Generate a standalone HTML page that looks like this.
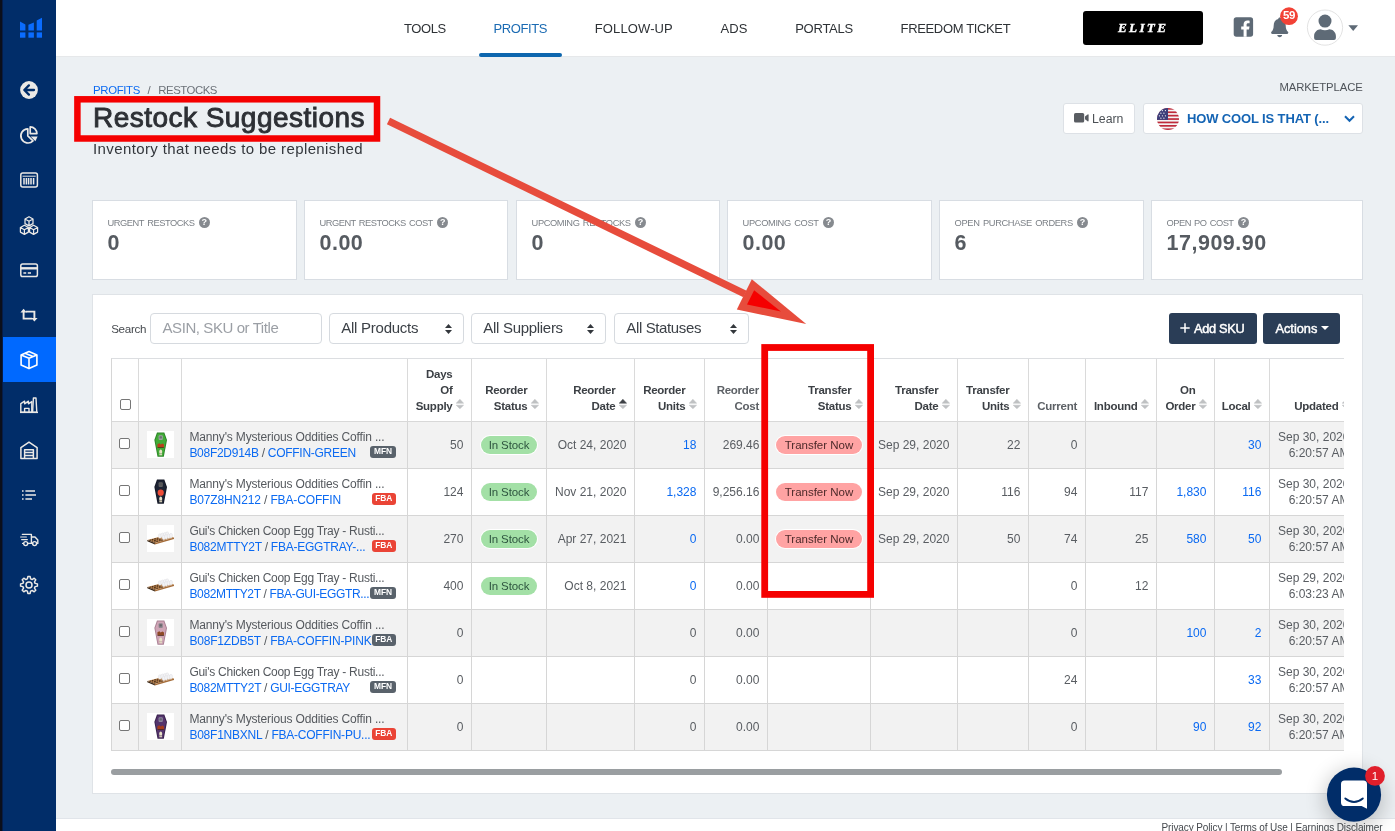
<!DOCTYPE html>
<html lang="en">
<head>
<meta charset="utf-8">
<title>Restock Suggestions</title>
<style>
*{box-sizing:border-box;margin:0;padding:0}
html,body{width:1395px;height:831px;overflow:hidden;background:#ecf0f3;font-family:"Liberation Sans",sans-serif;color:#555}
#app{position:relative;width:1395px;height:831px;overflow:hidden;background:#ecf0f3;will-change:transform}
a{color:#0b6af2;text-decoration:none}
.t{position:absolute;white-space:nowrap}
/* sidebar */
#side{position:absolute;left:0;top:0;width:56px;height:831px;background:#012d69}
#side .edge{position:absolute;left:0;top:0;width:3px;height:831px;background:linear-gradient(90deg,#0b0f1a 0,#0b0f1a 2px,#061c48 2px,#061c48 3px)}
#side .active{position:absolute;left:3px;top:337px;width:53px;height:45px;background:#0069ff}
#side svg{position:absolute;overflow:visible}
/* top */
#top{position:absolute;left:56px;top:0;width:1339px;height:57px;background:#fff;border-bottom:1px solid #e6e8ea}
.nav{font-size:13px;color:#2e3236;line-height:16px;top:21px}
.nav.on{color:#1b6bb3}
#navbar{position:absolute;left:479px;top:52.8px;width:83px;height:4.3px;background:#0d66ae;border-radius:2.2px}
#elite{position:absolute;left:1083px;top:11px;width:120px;height:34px;background:#000;border-radius:3px}
#elite .t{color:#fff;font-family:"Liberation Serif",serif;font-style:italic;font-weight:bold;font-size:13.2px;line-height:16px;top:8.7px;-webkit-text-stroke:.35px #fff}
/* heading */
.crumb{font-size:11.4px;line-height:14px;color:#6b7178;top:83px}
.ttl{font-size:28px;line-height:34px;font-weight:normal;-webkit-text-stroke:.9px #2d3035;color:#2d3035;top:101px}
.subt{font-size:15px;line-height:20px;color:#33373c;top:139px}
.mk{font-size:11.3px;line-height:14px;color:#4f545a;top:80px}
.btnw{position:absolute;background:#fff;border:1px solid #dde1e6;border-radius:3px}
/* cards */
.card{position:absolute;top:200px;height:80px;background:#fff;border:1px solid #d8dde3}
.card .l{font-size:9.3px;line-height:12px;color:#7a7f85;top:16.4px;word-spacing:1.2px}
.card .v{font-size:21.5px;line-height:26px;font-weight:bold;color:#565b61;top:29.2px}
.q{position:absolute;width:11px;height:11px;border-radius:50%;background:#868a8f;color:#fff;font-size:9px;font-weight:bold;line-height:11px;text-align:center;top:16.4px}
/* panel */
#panel{position:absolute;left:92px;top:294px;width:1271px;height:500px;background:#fff;border:1px solid #dfe3e7}
.inp{position:absolute;top:313px;height:31px;background:#fff;border:1px solid #d6dadf;border-radius:4px}
.inp .t{font-size:15px;line-height:18px;top:5.1px;color:#3c4147}
.btnd{position:absolute;top:313px;height:31px;background:#2a3d56;border-radius:3px}
.btnd .t{color:#fff;font-size:12.8px;line-height:16px;top:8.1px;font-weight:normal;-webkit-text-stroke:.45px #fff}
/* table */
#tw{position:absolute;left:111px;top:358px;width:1233px;height:395px;overflow:hidden}
table{border-collapse:separate;border-spacing:0;table-layout:fixed;width:1246px;border-top:1px solid #dcdee1;border-left:1px solid #d6d6d6}
th,td{border-right:1px solid #d6d6d6;border-bottom:1px solid #d6d6d6;overflow:hidden;white-space:nowrap;padding:0 7.6px 0 0;text-align:right;vertical-align:middle}
th{height:63px;font-size:11.5px;letter-spacing:-.25px;line-height:16px;font-weight:bold;color:#3c4045;vertical-align:bottom;padding:0 18.5px 7px 0;position:relative;background:#fff;border-right-color:#dadada;border-bottom-color:#d8d8d8}
th.ns{padding-right:8px;color:#5d6166}
th .s{position:absolute;right:7.1px;bottom:12px;width:7.8px;height:10px}
td{height:47px;font-size:12px;line-height:16px;color:#595d62}
tr.o td{background:#f2f2f2}
td.c{text-align:center;padding:0}
td.p{text-align:left;padding:0 0 0 7.4px;font-size:12px;position:relative;color:#55595e}
td.p div{overflow:hidden;width:200px;white-space:nowrap}
td.b{color:#0b6af2}
.cb{display:inline-block;width:11px;height:11px;border:1px solid #767676;border-radius:2px;background:#fff;vertical-align:middle;margin-top:-4.4px;margin-left:-1px}
.pill{display:inline-block;height:18.4px;line-height:18.6px;font-size:11.5px;border-radius:9.2px;padding:0 7.7px;color:#2f5640;box-shadow:0 0 0 1px rgba(255,255,255,.95);letter-spacing:-.1px;position:relative;top:0}
.pill.g{background:#a3e0a6}
.pill.r{background:#ffa3a3;color:#4d2a2a;padding:0 8.9px;letter-spacing:0}
.bd{position:absolute;right:11px;top:24.1px;height:11.8px;line-height:11.8px;font-size:8.4px;font-weight:bold;color:#fff;border-radius:3px;padding:0 3.6px;letter-spacing:0}
.bd.m{background:#59626b;padding:0 3.95px}.bd.m.n{padding:0 3.6px}
.bd.f{background:#ea4436}
.th{display:inline-block;width:27px;height:27px;background:#fff;vertical-align:middle;position:relative;left:.5px;top:-.6px}
tr.o .th.tr,.th.tr{background:transparent}
#sb{position:absolute;left:111px;top:769px;width:1171px;height:6px;border-radius:3px;background:#9a9ea1}
#foot{position:absolute;left:56px;top:818px;width:1339px;height:13px;background:#fff;border-top:1px solid #e1e5ea}
#foot .t{font-size:10px;line-height:13px;color:#44484d;top:2px}
#ann{position:absolute;left:0;top:0;width:1395px;height:831px;pointer-events:none}
</style>
</head>
<body>
<div id="app"><div id="top"></div><span class="t nav " style="left:404px;letter-spacing:-0.411px;">TOOLS</span><span class="t nav on" style="left:493.6px;letter-spacing:-0.424px;">PROFITS</span><span class="t nav " style="left:594.8px;letter-spacing:0.117px;">FOLLOW-UP</span><span class="t nav " style="left:720.6px;letter-spacing:0.033px;">ADS</span><span class="t nav " style="left:795.2px;letter-spacing:-0.247px;">PORTALS</span><span class="t nav " style="left:900.6px;letter-spacing:-0.355px;">FREEDOM TICKET</span><div id="navbar"></div><div id="elite"><span class="t " style="left:35px;letter-spacing:2.289px;">ELITE</span></div><svg style="position:absolute;left:1220px;top:0" width="175" height="56" viewBox="1220 0 175 56"><rect x="1233.7" y="17.3" width="19.4" height="19.4" rx="2.6" fill="#5e6a76"/><path d="M1246.6 36.7 V29.4 H1249 L1249.5 26.5 H1246.6 V24.7 C1246.6 23.7 1247 23.2 1248.2 23.2 H1249.6 V20.7 C1249.2 20.6 1248.3 20.5 1247.4 20.5 C1245.1 20.5 1243.6 21.9 1243.6 24.4 V26.5 H1241.2 V29.4 H1243.6 V36.7Z" fill="#fff"/><path d="M1279.7 17.6 C1280.6 17.6 1281.1 18.2 1281.1 19 C1284.2 19.7 1285.7 22.2 1285.7 25.4 C1285.7 29 1286.8 30.6 1288 31.8 C1288.7 32.6 1288.2 33.9 1287.1 33.9 H1272.3 C1271.2 33.9 1270.7 32.6 1271.4 31.8 C1272.6 30.6 1273.7 29 1273.7 25.4 C1273.7 22.2 1275.2 19.7 1278.3 19 C1278.3 18.2 1278.8 17.6 1279.7 17.6Z M1277.3 35 H1282.1 C1282.1 36.3 1281 37.2 1279.7 37.2 C1278.4 37.2 1277.3 36.3 1277.3 35Z" fill="#5e6a76"/><circle cx="1289" cy="16.2" r="8.9" fill="#f24236"/><circle cx="1325" cy="27.6" r="17.6" fill="#fff" stroke="#e3e3e3" stroke-width="1"/><circle cx="1325" cy="21.1" r="6.5" fill="#5e6a76"/><path d="M1314.1 38 V36 C1314.1 32 1317.4 29.2 1320.6 29.2 C1322 29.9 1323.4 30.3 1325 30.3 C1326.6 30.3 1328 29.9 1329.4 29.2 C1332.6 29.2 1335.9 32 1335.9 36 V38 Q1335.9 39.9 1334 39.9 H1316 Q1314.1 39.9 1314.1 38Z" fill="#5e6a76"/><path d="M1348.4 25.2 H1358 L1353.2 31Z" fill="#5e6a76"/></svg><span class="t" style="left:1279px;top:7.6px;width:20px;text-align:center;font-size:11.5px;font-weight:bold;line-height:14px;color:#fff;letter-spacing:-.3px">59</span><div id="side"><div class="edge"></div><div class="active"></div><svg width="56" height="831" viewBox="0 0 56 831" style="left:0;top:0" fill="none" stroke="none"><g fill="#0a6cff"><path d="M20 21.6 L25.4 24.6 V30.6 H20Z"/><rect x="20" y="32.4" width="5.4" height="5.3"/><path d="M28.4 24.8 L33.9 22.4 V30.6 H28.4Z"/><rect x="28.4" y="32.4" width="5.5" height="5.3"/><path d="M36.7 20.6 L42 17.8 V30.6 H36.7Z"/><rect x="36.7" y="32.4" width="5.3" height="5.3"/></g><circle cx="29" cy="90" r="8.9" fill="#ebe9e6"/><path d="M24.6 90 H34 M28.9 85.4 L24.3 90 L28.9 94.6" stroke="#012d69" stroke-width="2.3" fill="none" stroke-linecap="round" stroke-linejoin="round"/><g stroke="#ebe9e6" stroke-width="1.7" fill="none" stroke-linejoin="round"><path d="M27.8 128.8 A7.1 7.1 0 1 0 33 140.9 L27.8 135.9 Z"/><path d="M30.2 126.9 V133.6 H36.9 A6.7 6.7 0 0 0 30.2 126.9Z"/></g><path d="M30.6 136.4 H37.6 L35.4 141.2Z" fill="#ebe9e6"/><g stroke="#ebe9e6" fill="none"><rect x="20.8" y="172.9" width="16.6" height="14.2" rx="2" stroke-width="1.5"/><path d="M22.5 176.2 H35.7" stroke-width="1"/><path d="M24 178 V184.4 M26.4 178 V184.4 M28.6 178 V184.4 M31 178 V184.4 M33.6 178 V184.4" stroke-width="1.5"/></g><g stroke="#ebe9e6" stroke-width="1.25" fill="none" stroke-linejoin="round"><path d="M29 216.70000000000002 L33.002 219.0 V223.60000000000002 L29 225.9 L24.998 223.60000000000002 V219.0Z M24.998 219.0 L29 221.3 L33.002 219.0 M29 221.3 V225.9"/><path d="M24.4 225.20000000000002 L28.401999999999997 227.5 V232.10000000000002 L24.4 234.4 L20.398 232.10000000000002 V227.5Z M20.398 227.5 L24.4 229.8 L28.401999999999997 227.5 M24.4 229.8 V234.4"/><path d="M33.6 225.20000000000002 L37.602000000000004 227.5 V232.10000000000002 L33.6 234.4 L29.598000000000003 232.10000000000002 V227.5Z M29.598000000000003 227.5 L33.6 229.8 L37.602000000000004 227.5 M33.6 229.8 V234.4"/></g><g stroke="#ebe9e6" fill="none"><rect x="20.8" y="264" width="16.6" height="12.6" rx="1.8" stroke-width="1.5"/><path d="M20.8 268.3 H37.4" stroke-width="2.4"/><path d="M23.4 273 H26.2 M27.8 273 H31" stroke-width="1.4"/></g><g stroke="#ebe9e6" stroke-width="1.9" fill="none" stroke-linejoin="miter"><path d="M23.6 311 V318.6 H32.2"/><path d="M34.4 319.4 V311.6 H26"/></g><path d="M20.4 312.4 L23.6 308.8 L26.8 312.4Z M31.2 318 L34.4 321.6 L37.6 318Z" fill="#ebe9e6"/><g stroke="#fff" stroke-width="1.6" fill="none" stroke-linejoin="round"><path d="M29 351.6 L36.9 354.9 V365 L29 368.6 L21.1 365 V354.9Z"/><path d="M21.1 354.9 L29 358.2 L36.9 354.9 M29 358.2 V368.6 M25 353.3 L33 356.6"/></g><g stroke="#ebe9e6" stroke-width="1.4" fill="none" stroke-linejoin="round"><path d="M20.8 412.2 V403.6 L24.6 401.2 V403.8 L28.4 401.2 V403.8 L31.8 401.6 V412.2Z"/><path d="M32.6 412.2 L33.4 398 H36 L36.8 412.2Z"/><path d="M20 412.4 H38" /><path d="M24.6 412 V408.4 H29 V412"/></g><g stroke="#ebe9e6" stroke-width="1.5" fill="none" stroke-linejoin="round"><path d="M20.9 458.4 V447.6 L29 442.2 L37.1 447.6 V458.4Z"/><path d="M24.6 458.4 V449.8 H33.4 V458.4 M24.6 452.6 H33.4 M24.6 455.5 H33.4"/></g><g stroke="#ebe9e6" stroke-width="1.7" fill="none"><path d="M22 491 H23.6 M25.4 491 H35 M22 495 H23.6 M25.4 495 H36 M22 499 H23.6 M25.4 499 H32"/></g><g stroke="#ebe9e6" stroke-width="1.4" fill="none" stroke-linejoin="round" stroke-linecap="round"><path d="M22.4 534.4 H31.4 V543.2 M31.4 537 H35 L37.8 540 V543.4 H36.6 M22.6 543.4 H23.4 M28 543.4 H32.6"/><circle cx="25.7" cy="543.6" r="2"/><circle cx="34.6" cy="543.6" r="2"/><path d="M20.6 537 H26.4 M21.6 539.6 H27.4" stroke-width="1.1"/></g><g stroke="#ebe9e6" stroke-width="1.5" fill="none" stroke-linejoin="round"><path d="M27.87 576.58 L30.13 576.58 L30.61 578.91 L32.16 579.55 L34.16 578.24 L35.76 579.84 L34.45 581.84 L35.09 583.39 L37.42 583.87 L37.42 586.13 L35.09 586.61 L34.45 588.16 L35.76 590.16 L34.16 591.76 L32.16 590.45 L30.61 591.09 L30.13 593.42 L27.87 593.42 L27.39 591.09 L25.84 590.45 L23.84 591.76 L22.24 590.16 L23.55 588.16 L22.91 586.61 L20.58 586.13 L20.58 583.87 L22.91 583.39 L23.55 581.84 L22.24 579.84 L23.84 578.24 L25.84 579.55 L27.39 578.91Z"/><circle cx="29" cy="585" r="3"/></g></svg></div><span class="t crumb" style="left:93px;letter-spacing:-0.346px;"><a href="#">PROFITS</a></span><span class="t crumb" style="left:147.6px;">/</span><span class="t crumb" style="left:158.3px;letter-spacing:-0.481px;">RESTOCKS</span><span class="t ttl" style="left:93px;letter-spacing:0.47px;">Restock Suggestions</span><span class="t subt" style="left:93px;letter-spacing:0.387px;">Inventory that needs to be replenished</span><span class="t mk" style="left:1279.5px;letter-spacing:-0.083px;">MARKETPLACE</span><div class="btnw" style="left:1063px;top:103px;width:72px;height:31px"><svg style="position:absolute;left:10px;top:9.4px" width="15" height="10" viewBox="0 0 15 10"><rect x="0" y="0" width="10.2" height="9.6" rx="1.6" fill="#595d62"/><path d="M11 3.4 L13.6 1.4 Q14.6 .8 14.6 2 V7.6 Q14.6 8.8 13.6 8.2 L11 6.2Z" fill="#595d62"/></svg><span class="t " style="left:28px;letter-spacing:-0.013px;top:7px;font-size:12.3px;line-height:16px;color:#4c5156">Learn</span></div><div class="btnw" style="left:1143px;top:103px;width:220px;height:31px"><svg style="position:absolute;left:13px;top:4px" width="22" height="22" viewBox="0 0 22 22"><defs><clipPath id="fc"><circle cx="11" cy="11" r="11"/></clipPath></defs><g clip-path="url(#fc)"><rect width="22" height="22" fill="#f4f4f4"/><rect x="0" y="0" width="22" height="1.7" fill="#bf2b3b"/><rect x="0" y="3.4" width="22" height="1.7" fill="#bf2b3b"/><rect x="0" y="6.8" width="22" height="1.7" fill="#bf2b3b"/><rect x="0" y="10.2" width="22" height="1.7" fill="#bf2b3b"/><rect x="0" y="13.6" width="22" height="1.7" fill="#bf2b3b"/><rect x="0" y="17" width="22" height="1.7" fill="#bf2b3b"/><rect x="0" y="20.4" width="22" height="1.7" fill="#bf2b3b"/><rect x="0" y="0" width="11" height="11.9" fill="#3d3f7a"/><g fill="#fff"><circle cx="2.4" cy="2.6" r=".6"/><circle cx="5.4" cy="2.6" r=".6"/><circle cx="8.4" cy="2.6" r=".6"/><circle cx="3.9" cy="5.2" r=".6"/><circle cx="6.9" cy="5.2" r=".6"/><circle cx="2.4" cy="7.8" r=".6"/><circle cx="5.4" cy="7.8" r=".6"/><circle cx="8.4" cy="7.8" r=".6"/><circle cx="3.9" cy="10.2" r=".6"/><circle cx="6.9" cy="10.2" r=".6"/></g></g></svg><span class="t " style="left:43px;letter-spacing:-0.134px;top:7px;font-size:13px;line-height:16px;font-weight:bold;color:#1464b4">HOW COOL IS THAT (...</span><svg style="position:absolute;left:200px;top:11px" width="11" height="8" viewBox="0 0 11 8"><path d="M1 1.2 L5.5 5.8 L10 1.2" fill="none" stroke="#1464b4" stroke-width="2"/></svg></div><div class="card" style="left:92px;width:205px"><span class="t l" style="left:14.6px;letter-spacing:-0.467px;">URGENT RESTOCKS</span><span class="q" style="left:105.8px">?</span><span class="t v" style="left:14.6px;letter-spacing:0.931px;">0</span></div><div class="card" style="left:304px;width:204px"><span class="t l" style="left:14.6px;letter-spacing:-0.513px;">URGENT RESTOCKS COST</span><span class="q" style="left:132.2px">?</span><span class="t v" style="left:14.6px;letter-spacing:0.447px;">0.00</span></div><div class="card" style="left:516px;width:204px"><span class="t l" style="left:14.6px;letter-spacing:-0.406px;">UPCOMING RESTOCKS</span><span class="q" style="left:117.9px">?</span><span class="t v" style="left:14.6px;letter-spacing:0.931px;">0</span></div><div class="card" style="left:727px;width:205px"><span class="t l" style="left:14.6px;letter-spacing:-0.362px;">UPCOMING COST</span><span class="q" style="left:94.9px">?</span><span class="t v" style="left:14.6px;letter-spacing:0.447px;">0.00</span></div><div class="card" style="left:939px;width:205px"><span class="t l" style="left:14.6px;letter-spacing:-0.356px;">OPEN PURCHASE ORDERS</span><span class="q" style="left:137.1px">?</span><span class="t v" style="left:14.6px;letter-spacing:0.931px;">6</span></div><div class="card" style="left:1151px;width:212px"><span class="t l" style="left:14.6px;letter-spacing:-0.525px;">OPEN PO COST</span><span class="q" style="left:85.9px">?</span><span class="t v" style="left:14.6px;letter-spacing:0.493px;">17,909.90</span></div><div id="panel"></div><span class="t " style="left:111.2px;letter-spacing:-0.307px;top:321.3px;font-size:11.6px;line-height:15px;color:#45494e">Search</span><div class="inp" style="left:150px;width:172px"><span class="t " style="left:11.5px;letter-spacing:-0.416px;color:#9b9fa5">ASIN, SKU or Title</span></div><div class="inp" style="left:329px;width:135px"><span class="t " style="left:11.3px;letter-spacing:-0.259px;">All Products</span><svg style="position:absolute;right:11px;top:10px" width="7" height="10" viewBox="0 0 7 10"><path d="M3.5 0 L7 4 H0Z M0 6 H7 L3.5 10Z" fill="#33373c"/></svg></div><div class="inp" style="left:471px;width:135px"><span class="t " style="left:11.3px;letter-spacing:-0.298px;">All Suppliers</span><svg style="position:absolute;right:11px;top:10px" width="7" height="10" viewBox="0 0 7 10"><path d="M3.5 0 L7 4 H0Z M0 6 H7 L3.5 10Z" fill="#33373c"/></svg></div><div class="inp" style="left:614px;width:135px"><span class="t " style="left:11.3px;letter-spacing:-0.374px;">All Statuses</span><svg style="position:absolute;right:11px;top:10px" width="7" height="10" viewBox="0 0 7 10"><path d="M3.5 0 L7 4 H0Z M0 6 H7 L3.5 10Z" fill="#33373c"/></svg></div><div class="btnd" style="left:1169px;width:88px"><svg style="position:absolute;left:11px;top:9.8px" width="10" height="10" viewBox="0 0 10 10"><path d="M5 .3 V9.7 M.3 5 H9.7" stroke="#fff" stroke-width="1.5"/></svg><span class="t " style="left:24.9px;letter-spacing:-0.29px;">Add SKU</span></div><div class="btnd" style="left:1263px;width:77px"><span class="t " style="left:12.4px;letter-spacing:0.005px;">Actions</span><svg style="position:absolute;left:58px;top:13.2px" width="8" height="4" viewBox="0 0 8 4"><path d="M0 0 H8 L4 4Z" fill="#fff"/></svg></div><div id="tw"><table><colgroup><col style="width:27px"><col style="width:43px"><col style="width:226px"><col style="width:64px"><col style="width:75px"><col style="width:88px"><col style="width:70px"><col style="width:63px"><col style="width:103px"><col style="width:87px"><col style="width:71px"><col style="width:57px"><col style="width:71px"><col style="width:58px"><col style="width:55px"><col style="width:88px"></colgroup><thead><tr><th class="ns" style="text-align:center;padding:0 0 10px 0"><span class="cb" style="margin:0 0 -1px 0"></span></th><th class="ns"></th><th class="ns"></th><th class="">Days<br>Of<br>Supply<svg class="s" viewBox="0 0 7.8 10" preserveAspectRatio="none"><path d="M3.9 .2 L7.6 4.3 H.2Z" fill="#bfc1c3" stroke="#bfc1c3" stroke-width=".5" stroke-linejoin="round"/><path d="M.2 6.2 H7.6 L3.9 9.8Z" fill="#bfc1c3" stroke="#bfc1c3" stroke-width=".5" stroke-linejoin="round"/></svg></th><th class="">Reorder<br>Status<svg class="s" viewBox="0 0 7.8 10" preserveAspectRatio="none"><path d="M3.9 .2 L7.6 4.3 H.2Z" fill="#bfc1c3" stroke="#bfc1c3" stroke-width=".5" stroke-linejoin="round"/><path d="M.2 6.2 H7.6 L3.9 9.8Z" fill="#bfc1c3" stroke="#bfc1c3" stroke-width=".5" stroke-linejoin="round"/></svg></th><th class="">Reorder<br>Date<svg class="s" viewBox="0 0 7.8 10" preserveAspectRatio="none"><path d="M3.9 .2 L7.6 4.3 H.2Z" fill="#3c4045" stroke="#3c4045" stroke-width=".5" stroke-linejoin="round"/><path d="M.2 6.2 H7.6 L3.9 9.8Z" fill="#bfc1c3" stroke="#bfc1c3" stroke-width=".5" stroke-linejoin="round"/></svg></th><th class="">Reorder<br>Units<svg class="s" viewBox="0 0 7.8 10" preserveAspectRatio="none"><path d="M3.9 .2 L7.6 4.3 H.2Z" fill="#bfc1c3" stroke="#bfc1c3" stroke-width=".5" stroke-linejoin="round"/><path d="M.2 6.2 H7.6 L3.9 9.8Z" fill="#bfc1c3" stroke="#bfc1c3" stroke-width=".5" stroke-linejoin="round"/></svg></th><th class="ns">Reorder<br>Cost</th><th class="">Transfer<br>Status<svg class="s" viewBox="0 0 7.8 10" preserveAspectRatio="none"><path d="M3.9 .2 L7.6 4.3 H.2Z" fill="#bfc1c3" stroke="#bfc1c3" stroke-width=".5" stroke-linejoin="round"/><path d="M.2 6.2 H7.6 L3.9 9.8Z" fill="#bfc1c3" stroke="#bfc1c3" stroke-width=".5" stroke-linejoin="round"/></svg></th><th class="">Transfer<br>Date<svg class="s" viewBox="0 0 7.8 10" preserveAspectRatio="none"><path d="M3.9 .2 L7.6 4.3 H.2Z" fill="#bfc1c3" stroke="#bfc1c3" stroke-width=".5" stroke-linejoin="round"/><path d="M.2 6.2 H7.6 L3.9 9.8Z" fill="#bfc1c3" stroke="#bfc1c3" stroke-width=".5" stroke-linejoin="round"/></svg></th><th class="">Transfer<br>Units<svg class="s" viewBox="0 0 7.8 10" preserveAspectRatio="none"><path d="M3.9 .2 L7.6 4.3 H.2Z" fill="#bfc1c3" stroke="#bfc1c3" stroke-width=".5" stroke-linejoin="round"/><path d="M.2 6.2 H7.6 L3.9 9.8Z" fill="#bfc1c3" stroke="#bfc1c3" stroke-width=".5" stroke-linejoin="round"/></svg></th><th class="ns">Current</th><th class="">Inbound<svg class="s" viewBox="0 0 7.8 10" preserveAspectRatio="none"><path d="M3.9 .2 L7.6 4.3 H.2Z" fill="#bfc1c3" stroke="#bfc1c3" stroke-width=".5" stroke-linejoin="round"/><path d="M.2 6.2 H7.6 L3.9 9.8Z" fill="#bfc1c3" stroke="#bfc1c3" stroke-width=".5" stroke-linejoin="round"/></svg></th><th class="">On<br>Order<svg class="s" viewBox="0 0 7.8 10" preserveAspectRatio="none"><path d="M3.9 .2 L7.6 4.3 H.2Z" fill="#bfc1c3" stroke="#bfc1c3" stroke-width=".5" stroke-linejoin="round"/><path d="M.2 6.2 H7.6 L3.9 9.8Z" fill="#bfc1c3" stroke="#bfc1c3" stroke-width=".5" stroke-linejoin="round"/></svg></th><th class="">Local<svg class="s" viewBox="0 0 7.8 10" preserveAspectRatio="none"><path d="M3.9 .2 L7.6 4.3 H.2Z" fill="#bfc1c3" stroke="#bfc1c3" stroke-width=".5" stroke-linejoin="round"/><path d="M.2 6.2 H7.6 L3.9 9.8Z" fill="#bfc1c3" stroke="#bfc1c3" stroke-width=".5" stroke-linejoin="round"/></svg></th><th class="">Updated<svg class="s" viewBox="0 0 7.8 10" preserveAspectRatio="none"><path d="M3.9 .2 L7.6 4.3 H.2Z" fill="#bfc1c3" stroke="#bfc1c3" stroke-width=".5" stroke-linejoin="round"/><path d="M.2 6.2 H7.6 L3.9 9.8Z" fill="#bfc1c3" stroke="#bfc1c3" stroke-width=".5" stroke-linejoin="round"/></svg></th></tr></thead><tbody><tr class="o"><td class="c"><span class="cb"></span></td><td class="c"><svg class="th" viewBox="0 0 27 27"><path d="M10 1.6 H17.3 L20 8.9 L16.8 25.7 H10.5 L7.35 8.9Z" fill="#2c8428"/><path d="M10.7 2.5 H16.6 L19 9 L16.1 24.8 H11.2 L8.35 9Z" fill="#41ab37"/><rect x="11.6" y="4.3" width="4.2" height="4.7" rx=".9" fill="#9aa0a0"/><rect x="12.5" y="5.3" width="2.4" height="2.2" rx=".5" fill="#4b4f52" opacity=".6"/><path d="M10.4 13.2 L12.4 12.2 L13.6 13.4 L15.4 12.4 L17 13.4 V16.4 H10.4Z" fill="#b9401a"/><path d="M10.6 16 H16.8 V17 H10.6Z" fill="#2a1a10" opacity=".55"/><path d="M12.3 24.2 V20.2 Q12.3 18.4 13.7 18.4 Q15.1 18.4 15.1 20.2 V24.2Z" fill="#e9e2c8"/><path d="M11.8 22.4 H15.6 V23.2 H11.8Z" fill="#2c8428" opacity=".6"/></svg></td><td class="p"><div><span style="letter-spacing:-0.152px">Manny's Mysterious Oddities Coffin ...</span></div><div><span style="letter-spacing:-0.279px"><a href="#">B08F2D914B</a> / <a href="#">COFFIN-GREEN</a></span></div><span class="bd m">MFN</span></td><td>50</td><td style="text-align:center;padding:0"><span class="pill g">In Stock</span></td><td>Oct 24, 2020</td><td class="b">18</td><td>269.46</td><td style="text-align:center;padding:0"><span class="pill r">Transfer Now</span></td><td>Sep 29, 2020</td><td>22</td><td>0</td><td></td><td class="b"></td><td class="b">30</td><td>Sep 30, 2020<br>6:20:57 AM</td></tr><tr class=""><td class="c"><span class="cb"></span></td><td class="c"><svg class="th" viewBox="0 0 27 27"><path d="M10 1.6 H17.3 L20 8.9 L16.8 25.7 H10.5 L7.35 8.9Z" fill="#141826"/><path d="M10.7 2.5 H16.6 L19 9 L16.1 24.8 H11.2 L8.35 9Z" fill="#1d2333"/><rect x="11.6" y="4.3" width="4.2" height="4.7" rx=".9" fill="#5f5f60"/><rect x="12.5" y="5.3" width="2.4" height="2.2" rx=".5" fill="#4b4f52" opacity=".6"/><circle cx="13.7" cy="14.7" r="3.1" fill="#ef4d37"/><path d="M12.3 24.2 V20.2 Q12.3 18.4 13.7 18.4 Q15.1 18.4 15.1 20.2 V24.2Z" fill="#e9e2c8"/><path d="M11.8 22.4 H15.6 V23.2 H11.8Z" fill="#141826" opacity=".6"/></svg></td><td class="p"><div><span style="letter-spacing:-0.152px">Manny's Mysterious Oddities Coffin ...</span></div><div><span style="letter-spacing:-0.133px"><a href="#">B07Z8HN212</a> / <a href="#">FBA-COFFIN</a></span></div><span class="bd f">FBA</span></td><td>124</td><td style="text-align:center;padding:0"><span class="pill g">In Stock</span></td><td>Nov 21, 2020</td><td class="b">1,328</td><td>9,256.16</td><td style="text-align:center;padding:0"><span class="pill r">Transfer Now</span></td><td>Sep 29, 2020</td><td>116</td><td>94</td><td>117</td><td class="b">1,830</td><td class="b">116</td><td>Sep 30, 2020<br>6:20:57 AM</td></tr><tr class="o"><td class="c"><span class="cb"></span></td><td class="c"><svg class="th" viewBox="0 0 27 27"><path d="M.3 14.9 L19.4 10 L27 12.6 L7.9 17.9Z" fill="#c18b56"/><path d="M.3 14.9 L7.9 17.9 V19.4 L.3 16.3Z" fill="#3b2716"/><path d="M7.9 17.9 L27 12.6 V14 L7.9 19.4Z" fill="#a56d3a"/><g fill="#4a2e17"><ellipse cx="3.16" cy="15.16" rx="1.05" ry=".55" transform="rotate(-14 3.16 15.16)"/><ellipse cx="5.64" cy="14.52" rx="1.05" ry=".55" transform="rotate(-14 5.64 14.52)"/><ellipse cx="8.12" cy="13.88" rx="1.05" ry=".55" transform="rotate(-14 8.12 13.88)"/><ellipse cx="10.61" cy="13.25" rx="1.05" ry=".55" transform="rotate(-14 10.61 13.25)"/><ellipse cx="5.44" cy="16.06" rx="1.05" ry=".55" transform="rotate(-14 5.44 16.06)"/><ellipse cx="7.92" cy="15.42" rx="1.05" ry=".55" transform="rotate(-14 7.92 15.42)"/><ellipse cx="10.40" cy="14.78" rx="1.05" ry=".55" transform="rotate(-14 10.40 14.78)"/><ellipse cx="12.89" cy="14.15" rx="1.05" ry=".55" transform="rotate(-14 12.89 14.15)"/><ellipse cx="7.72" cy="16.96" rx="1.05" ry=".55" transform="rotate(-14 7.72 16.96)"/><ellipse cx="10.20" cy="16.32" rx="1.05" ry=".55" transform="rotate(-14 10.20 16.32)"/><ellipse cx="12.68" cy="15.68" rx="1.05" ry=".55" transform="rotate(-14 12.68 15.68)"/><ellipse cx="15.17" cy="15.05" rx="1.05" ry=".55" transform="rotate(-14 15.17 15.05)"/></g><g fill="#f3f3f5" stroke="#d6d6db" stroke-width=".35"><ellipse cx="12.90" cy="11.01" rx="1.55" ry="2.35"/><ellipse cx="15.38" cy="10.37" rx="1.55" ry="2.35"/><ellipse cx="17.86" cy="9.73" rx="1.55" ry="2.35"/><ellipse cx="20.15" cy="9.14" rx="1.55" ry="2.35"/><ellipse cx="16.70" cy="12.51" rx="1.55" ry="2.35"/><ellipse cx="19.18" cy="11.87" rx="1.55" ry="2.35"/><ellipse cx="21.66" cy="11.23" rx="1.55" ry="2.35"/><ellipse cx="23.95" cy="10.64" rx="1.55" ry="2.35"/></g></svg></td><td class="p"><div><span style="letter-spacing:-0.266px">Gui's Chicken Coop Egg Tray - Rusti...</span></div><div><span style="letter-spacing:-0.234px"><a href="#">B082MTTY2T</a> / <a href="#">FBA-EGGTRAY-...</a></span></div><span class="bd f">FBA</span></td><td>270</td><td style="text-align:center;padding:0"><span class="pill g">In Stock</span></td><td>Apr 27, 2021</td><td class="b">0</td><td>0.00</td><td style="text-align:center;padding:0"><span class="pill r">Transfer Now</span></td><td>Sep 29, 2020</td><td>50</td><td>74</td><td>25</td><td class="b">580</td><td class="b">50</td><td>Sep 30, 2020<br>6:20:57 AM</td></tr><tr class=""><td class="c"><span class="cb"></span></td><td class="c"><svg class="th tr" viewBox="0 0 27 27"><path d="M.3 14.9 L19.4 10 L27 12.6 L7.9 17.9Z" fill="#c18b56"/><path d="M.3 14.9 L7.9 17.9 V19.4 L.3 16.3Z" fill="#3b2716"/><path d="M7.9 17.9 L27 12.6 V14 L7.9 19.4Z" fill="#a56d3a"/><g fill="#4a2e17"><ellipse cx="3.16" cy="15.16" rx="1.05" ry=".55" transform="rotate(-14 3.16 15.16)"/><ellipse cx="5.64" cy="14.52" rx="1.05" ry=".55" transform="rotate(-14 5.64 14.52)"/><ellipse cx="8.12" cy="13.88" rx="1.05" ry=".55" transform="rotate(-14 8.12 13.88)"/><ellipse cx="10.61" cy="13.25" rx="1.05" ry=".55" transform="rotate(-14 10.61 13.25)"/><ellipse cx="5.44" cy="16.06" rx="1.05" ry=".55" transform="rotate(-14 5.44 16.06)"/><ellipse cx="7.92" cy="15.42" rx="1.05" ry=".55" transform="rotate(-14 7.92 15.42)"/><ellipse cx="10.40" cy="14.78" rx="1.05" ry=".55" transform="rotate(-14 10.40 14.78)"/><ellipse cx="12.89" cy="14.15" rx="1.05" ry=".55" transform="rotate(-14 12.89 14.15)"/><ellipse cx="7.72" cy="16.96" rx="1.05" ry=".55" transform="rotate(-14 7.72 16.96)"/><ellipse cx="10.20" cy="16.32" rx="1.05" ry=".55" transform="rotate(-14 10.20 16.32)"/><ellipse cx="12.68" cy="15.68" rx="1.05" ry=".55" transform="rotate(-14 12.68 15.68)"/><ellipse cx="15.17" cy="15.05" rx="1.05" ry=".55" transform="rotate(-14 15.17 15.05)"/></g><g fill="#f3f3f5" stroke="#d6d6db" stroke-width=".35"><ellipse cx="12.90" cy="11.01" rx="1.55" ry="2.35"/><ellipse cx="15.38" cy="10.37" rx="1.55" ry="2.35"/><ellipse cx="17.86" cy="9.73" rx="1.55" ry="2.35"/><ellipse cx="20.15" cy="9.14" rx="1.55" ry="2.35"/><ellipse cx="16.70" cy="12.51" rx="1.55" ry="2.35"/><ellipse cx="19.18" cy="11.87" rx="1.55" ry="2.35"/><ellipse cx="21.66" cy="11.23" rx="1.55" ry="2.35"/><ellipse cx="23.95" cy="10.64" rx="1.55" ry="2.35"/></g></svg></td><td class="p"><div><span style="letter-spacing:-0.266px">Gui's Chicken Coop Egg Tray - Rusti...</span></div><div><span style="letter-spacing:-0.344px"><a href="#">B082MTTY2T</a> / <a href="#">FBA-GUI-EGGTR...</a></span></div><span class="bd m">MFN</span></td><td>400</td><td style="text-align:center;padding:0"><span class="pill g">In Stock</span></td><td>Oct 8, 2021</td><td class="b">0</td><td>0.00</td><td style="text-align:center;padding:0"></td><td></td><td></td><td>0</td><td>12</td><td class="b"></td><td class="b"></td><td>Sep 29, 2020<br>6:03:23 AM</td></tr><tr class="o"><td class="c"><span class="cb"></span></td><td class="c"><svg class="th" viewBox="0 0 27 27"><path d="M10 1.6 H17.3 L20 8.9 L16.8 25.7 H10.5 L7.35 8.9Z" fill="#a98093"/><path d="M10.7 2.5 H16.6 L19 9 L16.1 24.8 H11.2 L8.35 9Z" fill="#cfa5b6"/><rect x="11.6" y="4.3" width="4.2" height="4.7" rx=".9" fill="#8f8890"/><rect x="12.5" y="5.3" width="2.4" height="2.2" rx=".5" fill="#4b4f52" opacity=".6"/><path d="M10.4 13.2 L12.4 12.2 L13.6 13.4 L15.4 12.4 L17 13.4 V16.4 H10.4Z" fill="#8f4a26"/><path d="M10.6 16 H16.8 V17 H10.6Z" fill="#2a1a10" opacity=".55"/><path d="M12.3 24.2 V20.2 Q12.3 18.4 13.7 18.4 Q15.1 18.4 15.1 20.2 V24.2Z" fill="#e9e2c8"/><path d="M11.8 22.4 H15.6 V23.2 H11.8Z" fill="#a98093" opacity=".6"/></svg></td><td class="p"><div><span style="letter-spacing:-0.152px">Manny's Mysterious Oddities Coffin ...</span></div><div><span style="letter-spacing:-0.18px"><a href="#">B08F1ZDB5T</a> / <a href="#">FBA-COFFIN-PINK</a></span></div><span class="bd m n">FBA</span></td><td>0</td><td style="text-align:center;padding:0"></td><td></td><td class="">0</td><td>0.00</td><td style="text-align:center;padding:0"></td><td></td><td></td><td>0</td><td></td><td class="b">100</td><td class="b">2</td><td>Sep 30, 2020<br>6:20:57 AM</td></tr><tr class=""><td class="c"><span class="cb"></span></td><td class="c"><svg class="th tr" viewBox="0 0 27 27"><path d="M.3 14.9 L19.4 10 L27 12.6 L7.9 17.9Z" fill="#c18b56"/><path d="M.3 14.9 L7.9 17.9 V19.4 L.3 16.3Z" fill="#3b2716"/><path d="M7.9 17.9 L27 12.6 V14 L7.9 19.4Z" fill="#a56d3a"/><g fill="#4a2e17"><ellipse cx="3.16" cy="15.16" rx="1.05" ry=".55" transform="rotate(-14 3.16 15.16)"/><ellipse cx="5.64" cy="14.52" rx="1.05" ry=".55" transform="rotate(-14 5.64 14.52)"/><ellipse cx="8.12" cy="13.88" rx="1.05" ry=".55" transform="rotate(-14 8.12 13.88)"/><ellipse cx="10.61" cy="13.25" rx="1.05" ry=".55" transform="rotate(-14 10.61 13.25)"/><ellipse cx="5.44" cy="16.06" rx="1.05" ry=".55" transform="rotate(-14 5.44 16.06)"/><ellipse cx="7.92" cy="15.42" rx="1.05" ry=".55" transform="rotate(-14 7.92 15.42)"/><ellipse cx="10.40" cy="14.78" rx="1.05" ry=".55" transform="rotate(-14 10.40 14.78)"/><ellipse cx="12.89" cy="14.15" rx="1.05" ry=".55" transform="rotate(-14 12.89 14.15)"/><ellipse cx="7.72" cy="16.96" rx="1.05" ry=".55" transform="rotate(-14 7.72 16.96)"/><ellipse cx="10.20" cy="16.32" rx="1.05" ry=".55" transform="rotate(-14 10.20 16.32)"/><ellipse cx="12.68" cy="15.68" rx="1.05" ry=".55" transform="rotate(-14 12.68 15.68)"/><ellipse cx="15.17" cy="15.05" rx="1.05" ry=".55" transform="rotate(-14 15.17 15.05)"/></g><g fill="#f3f3f5" stroke="#d6d6db" stroke-width=".35"><ellipse cx="12.90" cy="11.01" rx="1.55" ry="2.35"/><ellipse cx="15.38" cy="10.37" rx="1.55" ry="2.35"/><ellipse cx="17.86" cy="9.73" rx="1.55" ry="2.35"/><ellipse cx="20.15" cy="9.14" rx="1.55" ry="2.35"/><ellipse cx="16.70" cy="12.51" rx="1.55" ry="2.35"/><ellipse cx="19.18" cy="11.87" rx="1.55" ry="2.35"/><ellipse cx="21.66" cy="11.23" rx="1.55" ry="2.35"/><ellipse cx="23.95" cy="10.64" rx="1.55" ry="2.35"/></g></svg></td><td class="p"><div><span style="letter-spacing:-0.266px">Gui's Chicken Coop Egg Tray - Rusti...</span></div><div><span style="letter-spacing:-0.288px"><a href="#">B082MTTY2T</a> / <a href="#">GUI-EGGTRAY</a></span></div><span class="bd m">MFN</span></td><td>0</td><td style="text-align:center;padding:0"></td><td></td><td class="">0</td><td>0.00</td><td style="text-align:center;padding:0"></td><td></td><td></td><td>24</td><td></td><td class="b"></td><td class="b">33</td><td>Sep 30, 2020<br>6:20:57 AM</td></tr><tr class="o"><td class="c"><span class="cb"></span></td><td class="c"><svg class="th" viewBox="0 0 27 27"><path d="M10 1.6 H17.3 L20 8.9 L16.8 25.7 H10.5 L7.35 8.9Z" fill="#38224c"/><path d="M10.7 2.5 H16.6 L19 9 L16.1 24.8 H11.2 L8.35 9Z" fill="#54346c"/><rect x="11.6" y="4.3" width="4.2" height="4.7" rx=".9" fill="#8d86a0"/><rect x="12.5" y="5.3" width="2.4" height="2.2" rx=".5" fill="#4b4f52" opacity=".6"/><path d="M10.4 13.2 L12.4 12.2 L13.6 13.4 L15.4 12.4 L17 13.4 V16.4 H10.4Z" fill="#a53c1c"/><path d="M10.6 16 H16.8 V17 H10.6Z" fill="#2a1a10" opacity=".55"/><path d="M12.3 24.2 V20.2 Q12.3 18.4 13.7 18.4 Q15.1 18.4 15.1 20.2 V24.2Z" fill="#e9e2c8"/><path d="M11.8 22.4 H15.6 V23.2 H11.8Z" fill="#38224c" opacity=".6"/></svg></td><td class="p"><div><span style="letter-spacing:-0.152px">Manny's Mysterious Oddities Coffin ...</span></div><div><span style="letter-spacing:-0.226px"><a href="#">B08F1NBXNL</a> / <a href="#">FBA-COFFIN-PU...</a></span></div><span class="bd f">FBA</span></td><td>0</td><td style="text-align:center;padding:0"></td><td></td><td class="">0</td><td>0.00</td><td style="text-align:center;padding:0"></td><td></td><td></td><td>0</td><td></td><td class="b">90</td><td class="b">92</td><td>Sep 30, 2020<br>6:20:57 AM</td></tr></tbody></table></div><div id="sb"></div><div id="foot"><span class="t " style="left:1105.5px;letter-spacing:-0.104px;">Privacy Policy | Terms of Use | Earnings Disclaimer</span></div><svg style="position:absolute;left:1260px;top:700px" width="135" height="131" viewBox="1260 700 135 131"><defs><filter id="sh" x="-100%" y="-100%" width="300%" height="300%"><feGaussianBlur stdDeviation="10"/></filter></defs><circle cx="1354" cy="799" r="30" fill="#000" opacity=".2" filter="url(#sh)"/><circle cx="1354" cy="794.7" r="27.1" fill="#012d69"/><path d="M1344.6 780.6 H1363.4 Q1367 780.6 1367 784.2 V808.8 L1361.6 806 H1344.6 Q1341 806 1341 802.4 V784.2 Q1341 780.6 1344.6 780.6Z" fill="#fff"/><path d="M1345.3 798.4 Q1354 805.4 1362.8 798.4" fill="none" stroke="#012d69" stroke-width="1.9" stroke-linecap="round"/><circle cx="1375" cy="775.9" r="9.9" fill="#e01f2b"/></svg><span class="t" style="left:1365px;top:769px;width:20px;text-align:center;font-size:11.5px;line-height:14px;color:#fff">1</span><svg id="ann" viewBox="0 0 1395 831"><rect x="77.4" y="99.3" width="299.6" height="39.2" fill="none" stroke="#f50000" stroke-width="6.5"/><rect x="764.7" y="347.5" width="105.9" height="246.9" fill="none" stroke="#f50000" stroke-width="6.8"/><path d="M388.5 121 L745 294" stroke="#e74c3c" stroke-width="7.3" fill="none"/><path d="M751.8 279.2 L736.8 309.6 L806.2 324.1Z" fill="#e74c3c"/><path d="M754.1 290.2 L747 304.4 L780.9 311.5Z" fill="#f50000"/></svg></div>
</body>
</html>
